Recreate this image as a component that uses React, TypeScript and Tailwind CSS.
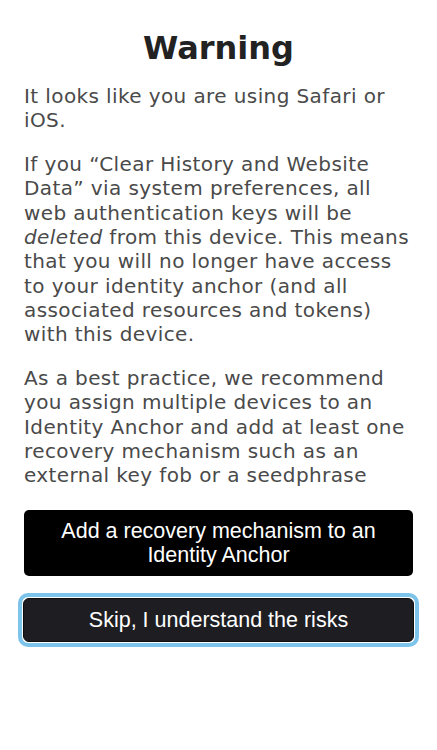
export default function App() {
  return (
    <div className="min-h-[750px] w-full bg-white px-6 pt-[29px] font-['DejaVu_Sans',sans-serif]">
      <h1 className="text-center text-[32px] leading-[38px] font-bold text-[#222222]">
        Warning
      </h1>

      {/* Body copy */}
      <div className="mt-[17px] space-y-[19.5px] whitespace-nowrap text-[20px] leading-[24.3px] tracking-[0.4px] text-[#4a4a4a]">
        <p>
          It looks like you are using Safari or
          <br />
          iOS.
        </p>
        <p>
          If you “Clear History and Website
          <br />
          Data” via system preferences, all
          <br />
          web authentication keys will be
          <br />
          <em>deleted</em> from this device. This means
          <br />
          that you will no longer have access
          <br />
          to your identity anchor (and all
          <br />
          associated resources and tokens)
          <br />
          with this device.
        </p>
        <p>
          As a best practice, we recommend
          <br />
          you assign multiple devices to an
          <br />
          Identity Anchor and add at least one
          <br />
          recovery mechanism such as an
          <br />
          external key fob or a seedphrase
        </p>
      </div>

      {/* Actions */}
      <div className="mt-[23px] font-['Liberation_Sans',Arial,sans-serif]">
        <button className="block w-full rounded-[5px] bg-black px-4 py-[9px] text-[21.5px] leading-[24px] text-white">
          Add a recovery mechanism to an
          <br />
          Identity Anchor
        </button>
        <div className="mt-[17px] -mx-[6px] rounded-[10px] border-[4px] border-[#7cc4ea] p-px">
          <button className="block w-full rounded-[6px] border border-[#0d0d0d] bg-[#1e1e22] px-4 py-[9px] text-[21.5px] leading-[24px] text-white">
            Skip, I understand the risks
          </button>
        </div>
      </div>
    </div>
  );
}
